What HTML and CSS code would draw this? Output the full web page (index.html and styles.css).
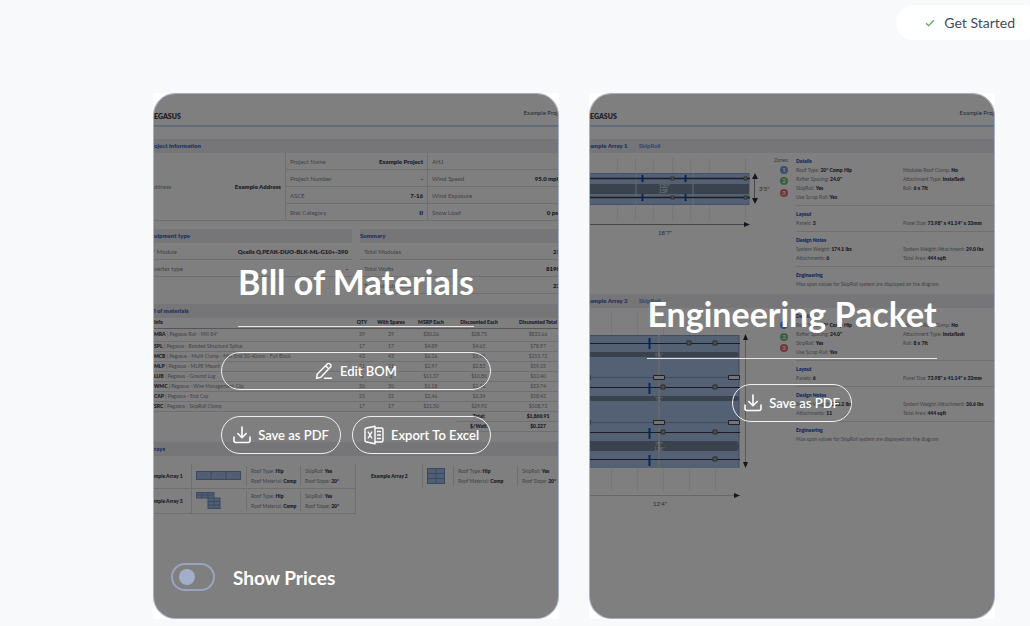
FILE: index.html
```html
<!DOCTYPE html>
<html lang="en">
<head>
<meta charset="utf-8">
<title>Project documents</title>
<link rel="stylesheet" href="styles.css">
</head>
<body>
<header class="topbar">
  <a class="get-started" href="#start">
    <svg width="10" height="8" viewBox="0 0 10 8" aria-hidden="true"><path d="M1 4.2 3.6 6.6 9 1.2" fill="none" stroke="#55a866" stroke-width="1.3"/></svg>
    Get Started
  </a>
</header>

<svg class="defs" aria-hidden="true">
  <symbol id="download" viewBox="0 0 18 18"><path d="M9 1v10.500M4.800 7.500 9 11.700l4.200-4.200M1 11v3.500a2 2 0 0 0 2 2h12a2 2 0 0 0 2-2V11" fill="none" stroke="#fff" stroke-width="1.600" stroke-linecap="round" stroke-linejoin="round"/></symbol>
  <symbol id="pencil" viewBox="0 0 18 18"><path d="M1.500 16.300l.8-4.300L12.300 1.900a1.800 1.800 0 0 1 2.600 0l.6.6a1.800 1.800 0 0 1 0 2.600L5.600 15.400zM10.600 3.700l3.100 3.100M9.500 16.300h7" fill="none" stroke="#fff" stroke-width="1.400" stroke-linecap="round" stroke-linejoin="round"/></symbol>
  <symbol id="excel" viewBox="0 0 20 20"><path d="M11 1.200 2.500 3Q1 3.300 1 4.500v11q0 1.200 1.500 1.500L11 18.800zM11 3h6.500q1.500 0 1.500 1.500v11q0 1.500-1.500 1.500H11M13.500 6.500h3M13.500 10h3M13.500 13.500h3M4.200 7l3.600 6M7.800 7l-3.600 6" fill="none" stroke="#fff" stroke-width="1.400" stroke-linecap="round" stroke-linejoin="round"/></symbol>
</svg>

<main class="cards">
  <article class="slot">
    <div class="card">
      <div class="sheet" aria-hidden="true">
        <div class="sheet-head"><b>EGASUS</b><span>Example Project</span></div>
        <div class="band">oject information</div>
        <div class="info">
          <div class="address"><span>ddress</span><b>Example Address</b></div>
          <dl class="facts">
            <div><dt>Project Name</dt><dd>Example Project</dd></div>
            <div><dt>Project Number</dt><dd>-</dd></div>
            <div><dt>ASCE</dt><dd>7-16</dd></div>
            <div><dt>Risk Category</dt><dd>II</dd></div>
          </dl>
          <dl class="facts outer">
            <div><dt>AHJ</dt><dd></dd></div>
            <div><dt>Wind Speed</dt><dd>95.0 mph</dd></div>
            <div><dt>Wind Exposure</dt><dd></dd></div>
            <div><dt>Snow Load</dt><dd>0 psf</dd></div>
          </dl>
        </div>
        <div class="pair">
          <section>
            <div class="band">uipment type</div>
            <dl class="facts flush">
              <div><dt>' Module</dt><dd>Qcells Q.PEAK-DUO-BLK-ML-G10+-390</dd></div>
              <div><dt>verter type</dt><dd>-</dd></div>
            </dl>
          </section>
          <section>
            <div class="band">Summary</div>
            <dl class="facts outer">
              <div><dt>Total Modules</dt><dd>21</dd></div>
              <div><dt>Total Watts</dt><dd>8190</dd></div>
              <div><dt>Total Attachments</dt><dd>23</dd></div>
            </dl>
          </section>
        </div>
        <div class="band">l of materials</div>
        <table class="bom">
          <colgroup><col><col class="c-qty"><col class="c-spare"><col class="c-msrp"><col class="c-each"><col class="c-total"></colgroup>
          <thead><tr><th>Info</th><th>QTY</th><th>With Spares</th><th>MSRP Each</th><th>Discounted Each</th><th>Discounted Total</th></tr></thead>
          <tbody>
            <tr><td><b>MRA</b> | Pegasus Rail - Mill 84"</td><td>29</td><td>29</td><td>$30.26</td><td>$28.75</td><td>$833.66</td></tr>
            <tr><td><b>SPL</b> | Pegasus - Bonded Structural Splice</td><td>17</td><td>17</td><td>$4.89</td><td>$4.65</td><td>$78.97</td></tr>
            <tr><td><b>MCB</b> | Pegasus - Multi-Clamp - Mid/End 30-40mm - Full Black</td><td>43</td><td>43</td><td>$6.26</td><td>$5.95</td><td>$255.72</td></tr>
            <tr><td><b>MLP</b> | Pegasus - MLPE Mount</td><td>21</td><td>21</td><td>$2.97</td><td>$2.82</td><td>$59.25</td></tr>
            <tr><td><b>LUB</b> | Pegasus - Ground Lug</td><td>3</td><td>3</td><td>$11.37</td><td>$10.80</td><td>$32.40</td></tr>
            <tr><td><b>WMC</b> | Pegasus - Wire Management Clip</td><td>30</td><td>30</td><td>$1.18</td><td>$1.12</td><td>$33.74</td></tr>
            <tr><td><b>CAP</b> | Pegasus - End Cap</td><td>25</td><td>25</td><td>$2.46</td><td>$2.34</td><td>$58.43</td></tr>
            <tr><td><b>SRC</b> | Pegasus - SkipRail Clamp</td><td>17</td><td>17</td><td>$31.50</td><td>$29.92</td><td>$508.72</td></tr>
          </tbody>
          <tfoot>
            <tr><td colspan="4"></td><th>Total:</th><th>$1,860.91</th></tr>
            <tr><td colspan="4"></td><th>$/Watt:</th><th>$0.227</th></tr>
          </tfoot>
        </table>
        <div class="band">rays</div>
        <div class="arrays">
          <div class="array">
            <b>mple Array 1</b>
            <span class="pic"><svg width="45" height="9" viewBox="0 0 45 9"><path d="M0 0h45v9H0z" fill="#a4bee6"/><path d="M0 .5h45M0 8.500h45M.5 0v9M15 0v9M30 0v9M44.500 0v9" stroke="#7593c4"/></svg></span>
            <p>Roof Type: <b>Hip</b><br>Roof Material: <b>Comp</b></p>
            <p>SkipRail: <b>Yes</b><br>Roof Slope: <b>20°</b></p>
          </div>
          <div class="array wide">
            <b>Example Array 2</b>
            <span class="pic"><svg width="18" height="16" viewBox="0 0 18 16"><path d="M0 0h18v16H0z" fill="#a4bee6"/><path d="M0 .5h18M0 5.500h18M0 10.500h18M0 15.500h18M.5 0v16M9 0v16M17.500 0v16" stroke="#7593c4"/></svg></span>
            <p>Roof Type: <b>Hip</b><br>Roof Material: <b>Comp</b></p>
            <p>SkipRail: <b>Yes</b><br>Roof Slope: <b>20°</b></p>
          </div>
          <div class="array">
            <b>mple Array 3</b>
            <span class="pic"><svg width="45" height="17" viewBox="0 0 45 17"><path d="M0 0h18v6H0zM12 6h12v11H12z" fill="#a4bee6"/><path d="M0 .5h18M0 3h18M0 6h24M12 9.500h12M12 13h12M12 16.500h12M.5 0v6M6 0v6M12 0v17M18 0v17M24 6v11" fill="none" stroke="#7593c4"/></svg></span>
            <p>Roof Type: <b>Hip</b><br>Roof Material: <b>Comp</b></p>
            <p>SkipRail: <b>Yes</b><br>Roof Slope: <b>20°</b></p>
          </div>
        </div>
      </div>
      <div class="overlay">
        <h2>Bill of Materials</h2>
        <div class="actions">
          <button class="full" type="button"><svg width="18" height="18"><use href="#pencil"/></svg>Edit BOM</button>
          <button type="button"><svg width="18" height="18"><use href="#download"/></svg>Save as PDF</button>
          <button type="button"><svg width="20" height="20"><use href="#excel"/></svg>Export To Excel</button>
        </div>
        <label class="prices"><input type="checkbox" role="switch">Show Prices</label>
      </div>
    </div>
  </article>

  <article class="slot">
    <div class="card">
      <div class="sheet" aria-hidden="true">
        <div class="sheet-head"><b>EGASUS</b><span>Example Project</span></div>
        <div class="band">ample Array 1 <i>SkipRail</i></div>
        <div class="plan">
          <svg class="diagram" width="206" height="141" viewBox="0 0 206 141">
            <path d="M27.500 5v63M45.500 5v63M63.500 5v63M82.500 5v63M100.500 5v63M119.500 5v63M155.500 5v63" stroke="#ececf0"/>
            <rect y="20" width="159" height="32" fill="#a9c2e8"/>
            <path d="M0 20.500h159M0 51.500h159M159 20v32" stroke="#86a5d4"/>
            <rect y="31" width="159" height="10" fill="#74859d"/>
            <path d="M46 20v32M103 20v32" stroke="#c9d3e2"/>
            <path d="M0 25.500h160M0 44.500h160" stroke="#303848" stroke-width="1.500"/>
            <path d="M52.500 22v7M95.500 22v7M52.500 41v7M95.500 41v7" stroke="#0d4fb8" stroke-width="2"/>
            <g fill="#b5b5b5" stroke="#5b5b5b"><path d="M81 24h3v3h-3zM154 24h3v3h-3zM81 43h3v3h-3zM154 43h3v3h-3z"/></g>
            <path d="M164.500 24v24M0 71.500h156" stroke="#8d8d95"/>
            <path d="M162 26l3-6 3 6zM162 45l3 6 3-6zM154 69v5l6-2.500z" fill="#2b2d3c"/>
            <g fill="#f2f4f8" font-size="5"><text x="69" y="35">120"</text><text x="69" y="40">139</text></g>
            <g fill="#55565f" font-size="6"><text x="68" y="82">18'7"</text><text x="169" y="38">3'5"</text></g>
            <text x="184" y="9" font-size="5" fill="#777">Zones:</text>
            <circle cx="194" cy="17" r="4" fill="#6f9de6"/><circle cx="194" cy="28" r="4" fill="#72c07c"/><circle cx="194" cy="40" r="4" fill="#ec6c72"/>
            <g fill="#fff" font-size="6" font-weight="700" text-anchor="middle"><text x="194" y="19">1</text><text x="194" y="30">2</text><text x="194" y="42">3</text></g>
          </svg>
          <div class="details">
            <section><h3>Details</h3><p>Roof Type: <b>20° Comp Hip</b></p><p>Modules Roof Clamp: <b>No</b></p><p>Rafter Spacing: <b>24.0"</b></p><p>Attachment Type: <b>Instaflash</b></p><p>SkipRail: <b>Yes</b></p><p>Rail: <b>6 x 7ft</b></p><p>Use Scrap Rail: <b>Yes</b></p></section>
            <section><h3>Layout</h3><p>Panels: <b>3</b></p><p>Panel Size: <b>73.98" x 41.14" x 33mm</b></p></section>
            <section><h3>Design Notes</h3><p>System Weight: <b>174.1 lbs</b></p><p>System Weight/Attachment: <b>29.0 lbs</b></p><p>Attachments: <b>6</b></p><p>Total Area: <b>444 sqft</b></p></section>
            <section><h3>Engineering</h3><p class="note">Max span values for SkipRail system are displayed on the diagram</p></section>
          </div>
        </div>
        <div class="band">ample Array 2 <i>SkipRail</i></div>
        <div class="plan">
          <svg class="diagram" width="206" height="204" viewBox="0 0 206 204">
            <path d="M21.500 4v23M47.500 4v23M73.500 4v23M99.500 4v23M125.500 4v23M21.500 160v23M47.500 160v23M73.500 160v23M99.500 160v23M125.500 160v23" stroke="#ececf0"/>
            <rect y="27" width="149" height="133" fill="#a9c2e8"/>
            <path d="M0 27.500h149M0 69.500h149M0 114.500h149M149 27v133" stroke="#7898c9"/>
            <path d="M0 44h146q3 0 3 2.500t-3 2.500H0zM0 88h146q3 0 3 2.500t-3 2.500H0zM0 133h146q3 0 3 5t-3 5H0z" fill="#74859d"/>
            <path d="M69 27v133" stroke="#c9cdd4" stroke-width="2"/>
            <path d="M0 35.500h150M0 79.500h150M0 124.500h150M0 151.500h150" stroke="#303848"/>
            <path d="M59.500 30v11M59.500 75v11M59.500 120v11M59.500 147v11" stroke="#0d4fb8" stroke-width="2"/>
            <g fill="#9c9c9c" stroke="#5b5b5b"><path d="M97 33h4v4h-4zM123 33h4v4h-4zM71 77h4v4h-4zM123 77h4v4h-4zM71 122h4v4h-4zM123 122h4v4h-4zM123 149h4v4h-4z"/></g>
            <g fill="#e8e8e8" stroke="#3f424c"><path d="M63.500 67.500h11v4h-11zM138.500 67.500h11v4h-11zM63.500 112.500h11v4h-11zM138.500 112.500h11v4h-11zM0 67v5M0 112v5"/></g>
            <path d="M155.500 31v126" stroke="#b0b0b8"/>
            <path d="M0 187.500h150" stroke="#cfcfd6"/>
            <path d="M153 32l2.500-6 2.500 6zM153 154l2.500 6 2.500-6zM144 185v5l6-2.500z" fill="#2b2d3c"/>
            <g fill="#e2e6ee" font-size="5"><text x="65" y="49">96"</text><text x="65" y="93">72"</text><text x="65" y="138">72"</text><text x="64" y="143">128"</text></g>
            <text x="63" y="198" font-size="6" fill="#55565f">12'4"</text>
            <circle cx="194" cy="17" r="4" fill="#6f9de6"/><circle cx="194" cy="29" r="4" fill="#72c07c"/><circle cx="194" cy="40" r="4" fill="#ec6c72"/>
            <g fill="#fff" font-size="6" font-weight="700" text-anchor="middle"><text x="194" y="19">1</text><text x="194" y="31">2</text><text x="194" y="42">3</text></g>
          </svg>
          <div class="details">
            <section><h3>Details</h3><p>Roof Type: <b>20° Comp Hip</b></p><p>Modules Roof Clamp: <b>No</b></p><p>Rafter Spacing: <b>24.0"</b></p><p>Attachment Type: <b>Instaflash</b></p><p>SkipRail: <b>Yes</b></p><p>Rail: <b>8 x 7ft</b></p><p>Use Scrap Rail: <b>Yes</b></p></section>
            <section><h3>Layout</h3><p>Panels: <b>6</b></p><p>Panel Size: <b>73.98" x 41.14" x 33mm</b></p></section>
            <section><h3>Design Notes</h3><p>System Weight: <b>336.2 lbs</b></p><p>System Weight/Attachment: <b>30.6 lbs</b></p><p>Attachments: <b>11</b></p><p>Total Area: <b>444 sqft</b></p></section>
            <section><h3>Engineering</h3><p class="note">Max span values for SkipRail system are displayed on the diagram</p></section>
          </div>
        </div>
      </div>
      <div class="overlay">
        <h2>Engineering Packet</h2>
        <div class="actions single">
          <button type="button"><svg width="18" height="18"><use href="#download"/></svg>Save as PDF</button>
        </div>
      </div>
    </div>
  </article>
</main>
</body>
</html>
```
FILE: styles.css
```css
* { box-sizing: border-box; }

body {
  margin: 0;
  background: #f8f9fb;
  color: #414a63;
  font-family: Lato, "Liberation Sans", sans-serif;
  overflow: hidden;
}

.defs { display: none; }

.topbar {
  display: flex;
  justify-content: flex-end;
  align-items: flex-start;
  height: 93px;
  padding-top: 5px;
  overflow: hidden;
}

.get-started {
  display: flex;
  align-items: center;
  gap: 9px;
  height: 35px;
  margin-right: -12px;
  padding: 0 27px 0 29px;
  border-radius: 18px;
  background: #fff;
  color: #414a63;
  font-size: 14px;
  font-weight: 400;
  text-decoration: none;
}

.cards {
  display: grid;
  grid-template-columns: 1fr 1fr;
  gap: 30px;
  padding: 0 35px 7px 153px;
}

.slot { background: #fff; min-width: 0; }

.card {
  display: grid;
  min-height: 526px;
  border: 1px solid #a9afc6;
  border-radius: 22px;
  background: #fff;
  overflow: hidden;
}

.sheet, .overlay { grid-area: 1 / 1; min-width: 0; }

/* Document preview */
.sheet {
  margin-right: -16px;
  font-size: 6px;
  line-height: 9px;
  color: #85858f;
}

.sheet b, .sheet dd, .sheet th { color: #404050; font-weight: 800; }

.sheet-head {
  display: flex;
  justify-content: space-between;
  height: 33px;
  margin-bottom: 12px;
  padding: 14px 8px 0 0;
  border-bottom: 2px solid #c6d8f2;
  color: #50505a;
}

.sheet-head b { padding-top: 4px; font-size: 7px; }

.band {
  height: 14px;
  background: #ededf2;
  color: #3f69bd;
  font-weight: 800;
  line-height: 13px;
}

.band i { margin-left: 10px; color: #7c9cd6; font-style: normal; }

.info { display: grid; grid-template-columns: 131px 142px 1fr; margin-bottom: 8px; }

.address {
  display: flex;
  justify-content: space-between;
  align-items: center;
  padding-right: 4px;
  border-bottom: 1px solid #dedee4;
}

.facts { margin: 0; border-left: 1px solid #dedee4; }

.facts div {
  display: flex;
  justify-content: space-between;
  height: 17px;
  padding: 0 4px;
  border-bottom: 1px solid #dedee4;
  line-height: 17px;
}

.facts dd { margin: 0; white-space: nowrap; }

.facts.flush div { padding-left: 0; }
.facts.outer div { padding-right: 14px; }

.pair { display: grid; grid-template-columns: 198px 1fr; gap: 8px; height: 75px; }

.pair .facts { border: 0; }

.bom {
  width: 100%;
  table-layout: fixed;
  border-collapse: collapse;
  font-size: 5px;
  line-height: 9px;
  text-align: center;
}

.c-qty { width: 28px; }
.c-spare { width: 30px; }
.c-msrp { width: 50px; }
.c-each { width: 46px; }
.c-total { width: 72px; }

.bom th, .bom td {
  height: 10px;
  padding: 0;
  border-bottom: 1px solid #dedee4;
  white-space: nowrap;
}

.bom thead th { border-color: #aaaab4; }
.bom tbody tr:first-child td { height: 13px; }
.bom th:first-child, .bom td:first-child { text-align: left; }
.bom tfoot td { border: 0; }
.bom + .band { margin-top: 10px; }

.arrays { display: grid; grid-template-columns: 202px 1fr; padding-top: 8px; }

.array {
  display: grid;
  grid-template-columns: 37px 55px 54px 1fr;
  align-items: center;
  height: 25px;
  border-right: 1px solid #dedee4;
  border-bottom: 1px solid #dedee4;
  font-size: 5px;
  line-height: 10px;
  white-space: nowrap;
}

.array.wide { grid-template-columns: 66px 31px 64px 1fr; border: 0; }
.array.wide > b { padding-left: 15px; }
.array p { margin: 0; padding-left: 4px; border-left: 1px solid #dedee4; }
.pic { display: flex; align-items: center; height: 24px; padding-left: 4px; border-left: 1px solid #dedee4; }

.plan { display: flex; }

.diagram { flex: none; font-family: Lato, "Liberation Sans", sans-serif; }

.details { flex: 1; font-size: 5px; line-height: 9px; white-space: nowrap; }

.details section {
  display: grid;
  grid-template-columns: 107px 1fr;
  padding: 4px 0 3px;
  border-bottom: 1px solid #dedee4;
}

.details section:last-child { border: 0; }
.details h3 { grid-column: 1 / -1; margin: 0; color: #2456c4; font: inherit; font-weight: 800; }
.details p { margin: 0; }
.details .note { grid-column: 1 / -1; }

/* Dimmed layer with the card's actions */
.overlay {
  position: relative;
  display: flex;
  flex-direction: column;
  align-items: center;
  justify-content: center;
  background: rgba(0, 0, 0, 0.5);
  color: #fff;
}

.overlay h2 {
  margin: 0 0 25px;
  padding-bottom: 20px;
  border-bottom: 1px solid #e6e6e6;
  font-size: 34px;
  font-weight: 700;
  line-height: 48px;
}

.actions {
  display: grid;
  grid-template-columns: 120px 139px;
  gap: 26px 11px;
}

.actions.single { grid-template-columns: 120px; }

.actions button {
  display: flex;
  align-items: center;
  justify-content: center;
  gap: 7px;
  height: 38px;
  padding: 0;
  border: 1px solid #f0f0f0;
  border-radius: 19px;
  background: transparent;
  color: #fff;
  font: 600 13px Lato, "Liberation Sans", sans-serif;
  white-space: nowrap;
}

.actions .full { grid-column: 1 / -1; }

.prices {
  position: absolute;
  left: 17px;
  bottom: 27px;
  display: flex;
  align-items: center;
  gap: 18px;
  font-size: 19px;
  font-weight: 700;
}

.prices input {
  display: flex;
  align-items: center;
  appearance: none;
  width: 44px;
  height: 28px;
  margin: 0;
  padding-left: 6px;
  border: 2px solid #98a4c0;
  border-radius: 14px;
}

.prices input::before {
  content: "";
  width: 16px;
  height: 16px;
  border-radius: 50%;
  background: #a3aec8;
}

.prices input:checked { justify-content: flex-end; padding: 0 6px 0 0; }
```
